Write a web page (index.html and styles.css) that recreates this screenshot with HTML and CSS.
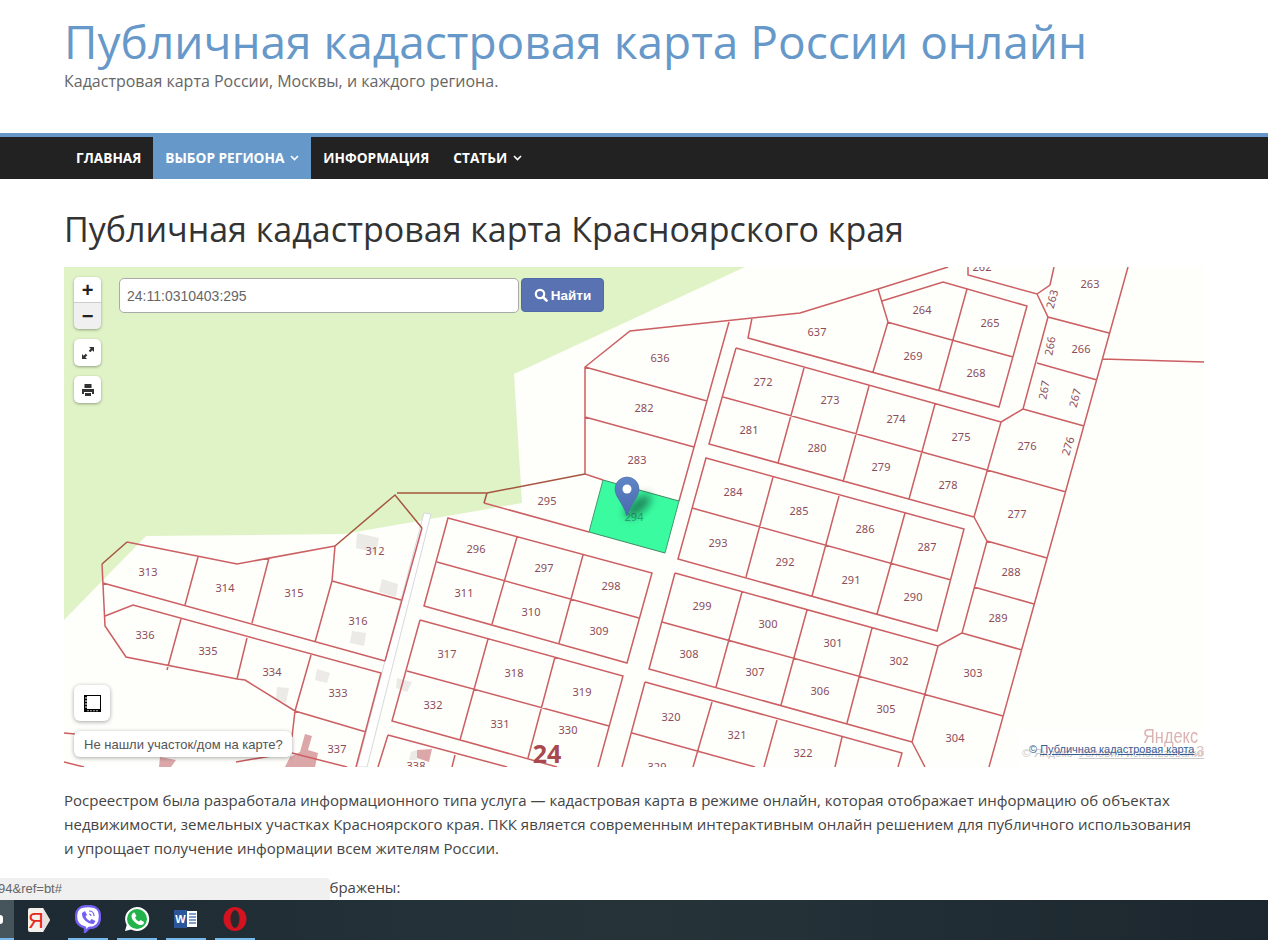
FILE: index.html
```html
<!DOCTYPE html>
<html lang="ru">
<head>
<meta charset="utf-8">
<title>Публичная кадастровая карта Красноярского края</title>
<link rel="stylesheet" href="styles.css">
</head>
<body>
<header class="site-head">
  <h1 class="site-title">Публичная кадастровая карта России онлайн</h1>
  <p class="site-desc">Кадастровая карта России, Москвы, и каждого региона.</p>
</header>
<nav class="nav">
  <a class="nav-item">Главная</a>
  <a class="nav-item active">Выбор региона<svg class="chev" viewBox="0 0 9 6"><path d="M1 1l3.500 3.500L8 1"/></svg></a>
  <a class="nav-item">Информация</a>
  <a class="nav-item">Статьи<svg class="chev" viewBox="0 0 9 6"><path d="M1 1l3.500 3.500L8 1"/></svg></a>
</nav>
<main class="content">
  <h2 class="page-title">Публичная кадастровая карта Красноярского края</h2>
  <div class="map">
    <svg class="map-art" viewBox="64 267 1140 500" width="1140" height="500">
      <defs>
        <filter id="blur" x="-50%" y="-50%" width="200%" height="200%"><feGaussianBlur stdDeviation="4"/></filter>
        <linearGradient id="pinfill" x1="0" y1="0" x2="0" y2="1"><stop offset="0" stop-color="#5f86c6"/><stop offset="1" stop-color="#4a68ae"/></linearGradient>
      </defs>
      <path class="forest" d="M64 267H745L514 374 522 503 344 534 146 536 64 620Z"/>
      <path class="road" d="M424 513L431 514 367 767H357Z"/>
      <path class="bld" d="M357 533L379 538 376 553 356 548ZM382 579L398 584 396 597 379 592ZM352 631L366 633 364 646 350 643ZM317 669L330 673 327 683 315 680ZM277 687L289 688 286 703 276 700ZM397 678L412 682 407 692 396 688ZM411 752L417 750 417 760 409 760Z"/>
      <path class="bld-red" d="M305 734L312 736 308 750 318 753 315 767H285L290 757 300 752ZM417 750L432 749 429 762 417 758ZM160 757L176 760 171 767H159Z"/>
      <path class="parcel-on" d="M603 480L679 501 665 553 589 532Z"/>
      <path class="lines" d="M603 480L585 474V367L630 331 800 313 878 289 948 267M585 367L707 401M585 417L694 447M729 322L679 501M752 318L748 338 999 407 1027 306 943 282 882 301M878 289L888 322 873 372M887 322L1013 357M967 289L939 390M968 267V275L1037 294 1050 285 1054 267M1037 294L1048 317 1109 333M1128 267L989 767M1102 359L1204 362M1048 317L1023 409 1001 422 974 517 987 541 1047 558M1037 363L1097 380M1023 409L1084 426M987 470L1066 492M736 348L1001 422M736 348L709 444 974 517M723 397L987 470M804 368L778 463M869 386L843 482M935 404L909 499M706 458L964 529 937 631 678 559ZM692 508L951 580M773 477L746 577M839 496L812 596M905 513L877 614M675 573L938 646 962 633 987 541M974 587L1034 604M962 633L1022 650M938 646L912 742 925 767M675 573L649 669 912 742M662 622L1003 716M742 592L716 687M807 610L781 705M872 628L847 723M645 682L902 753 898 767M645 682L622 767M632 733L755 767M712 702L693 767M777 720L764 767M842 737L835 767M448 518L652 573 627 663 424 606ZM437 562L639 618M517 537L492 624M583 555L559 643M420 620L623 676 598 767M420 620L392 721 557 767M407 671L609 726M488 639L460 740M555 657L528 758M388 735L507 767M388 735L378 767M455 755L452 767M102 564L105 626 126 657 237 679 245 680 295 711 366 732M127 542L237 564 335 546M103 583L385 661M105 616L133 605 381 673 356 767M198 557L185 605M269 558L252 623M335 546L332 581 315 642M332 581L401 600M181 619L167 670M247 638L237 679M311 655L295 711 292 737M422 528L385 661M292 753L347 767M64 733L75 734M64 762L84 767M236 762L277 755M484 503L589 532"/>
      <path class="lines-green" d="M102 564L127 542M335 546L395 495 422 528M397 493H487L585 474M487 493L484 503"/>
      <path class="parcel-edge" d="M603 480L679 501M665 553L589 532"/>
      <path class="parcel-side" d="M679 501L665 553M589 532L603 480"/>
      <g class="lb">
        <text x="660" y="362">636</text><text x="644" y="412">282</text><text x="637" y="464">283</text><text x="547" y="505">295</text>
        <text x="817" y="336">637</text><text x="922" y="314">264</text><text x="990" y="327">265</text><text x="913" y="360">269</text><text x="976" y="377">268</text><text x="1090" y="288">263</text><text x="1081" y="353">266</text>
        <text x="982" y="271">262</text>
        <text x="763" y="386">272</text><text x="830" y="404">273</text><text x="896" y="423">274</text><text x="961" y="441">275</text><text x="1027" y="450">276</text>
        <text x="749" y="434">281</text><text x="817" y="452">280</text><text x="881" y="471">279</text><text x="948" y="489">278</text><text x="1017" y="518">277</text>
        <text x="733" y="496">284</text><text x="799" y="515">285</text><text x="865" y="533">286</text><text x="927" y="551">287</text>
        <text x="718" y="547">293</text><text x="785" y="566">292</text><text x="851" y="584">291</text><text x="913" y="601">290</text><text x="1011" y="576">288</text><text x="998" y="622">289</text>
        <text x="476" y="553">296</text><text x="544" y="572">297</text><text x="611" y="590">298</text><text x="464" y="597">311</text><text x="531" y="616">310</text><text x="599" y="635">309</text>
        <text x="702" y="610">299</text><text x="768" y="628">300</text><text x="833" y="647">301</text><text x="899" y="665">302</text><text x="973" y="677">303</text><text x="955" y="742">304</text>
        <text x="886" y="713">305</text><text x="820" y="695">306</text><text x="755" y="676">307</text><text x="689" y="658">308</text>
        <text x="447" y="658">317</text><text x="514" y="677">318</text><text x="582" y="696">319</text><text x="433" y="709">332</text><text x="500" y="728">331</text><text x="568" y="734">330</text>
        <text x="671" y="721">320</text><text x="737" y="739">321</text><text x="803" y="757">322</text><text x="657" y="771">329</text>
        <text x="337" y="753">337</text><text x="416" y="770">338</text><text x="338" y="697">333</text><text x="272" y="676">334</text><text x="208" y="655">335</text><text x="145" y="639">336</text>
        <text x="148" y="576">313</text><text x="225" y="592">314</text><text x="294" y="597">315</text><text x="358" y="625">316</text><text x="375" y="555">312</text>
        <text transform="translate(1052 299) rotate(-75)" y="4">263</text>
        <text transform="translate(1050 346) rotate(-80)" y="4">266</text>
        <text transform="translate(1044 390) rotate(-80)" y="4">267</text>
        <text transform="translate(1075 398) rotate(-75)" y="4">267</text>
        <text transform="translate(1068 446) rotate(-72)" y="4">276</text>
      </g>
      <text class="lb-faint" x="634" y="521">294</text>
      <text class="lb-big" x="547" y="763">24</text>
      <ellipse class="pin-shadow" cx="638" cy="506" rx="16" ry="7" transform="rotate(-40 638 506)"/>
      <path class="pin" d="M627 516C623 503 615 497 615 489a12 12 0 0 1 24 0C639 497 631 503 627 516Z"/>
      <circle class="pin-dot" cx="627" cy="489" r="4.500"/>
    </svg>

    <div class="zoom-ctl">
      <button class="ctl-btn plus">+</button>
      <button class="ctl-btn minus">−</button>
    </div>
    <button class="ctl-single expand"><svg viewBox="0 0 14 14" width="14" height="14"><path class="ic-fill" d="M13 1v5l-1.700-1.700-2 2-1.600-1.600 2-2L8 1zM1 13V8l1.700 1.700 2-2 1.600 1.600-2 2L6 13z"/></svg></button>
    <button class="ctl-single print"><svg viewBox="0 0 14 14" width="14" height="14"><path class="ic-fill" d="M3.500 1h7v4h-7zM1 6h12v5h-2V9H3v2H1zM4 10h6v3H4z"/></svg></button>

    <form class="search">
      <input class="search-input" type="text" value="24:11:0310403:295">
      <button class="search-btn" type="button"><svg viewBox="0 0 14 14" width="14" height="14"><circle class="ic-ring" cx="6" cy="6" r="4.200"/><path class="ic-handle" d="M9 9l3.600 3.600"/></svg>Найти</button>
    </form>

    <button class="ruler"><svg viewBox="0 0 17 17" width="17" height="17"><path class="ic-black" d="M0 0h17v17H0z"/><path class="ic-white" d="M3 1h13v13H3z"/><path class="ic-ticks" d="M1 3h2M1 6h2M1 9h2M1 12h2M4 15v1.400M7 15v1.400M10 15v1.400M13 15v1.400"/></svg></button>
    <div class="tip">Не нашли участок/дом на карте?</div>

    <div class="attrib">
      <span class="ya-logo">Яндекс</span>
      <span class="ya-terms">© Яндекс &nbsp;<u>Условия использования</u></span>
      <span class="ya-num">3</span>
      <span class="attrib-link">© <u>Публичная кадастровая карта</u></span>
    </div>
  </div>
  <p class="text">Росреестром была разработала информационного типа услуга — кадастровая карта в режиме онлайн, которая отображает информацию об объектах недвижимости, земельных участках Красноярского края. ПКК является современным интерактивным онлайн решением для публичного использования и упрощает получение информации всем жителям России.</p>
  <p class="text">В публичной кадастровой карте изображены:</p>
</main>

<div class="status"><span class="status-url">94&amp;ref=bt#</span></div>

<div class="taskbar">
  <div class="task start"><span class="start-glyph"></span></div>
  <div class="task"><svg viewBox="0 0 26 26" width="26" height="26"><path class="ya-shape" d="M4 1h13l7 12-7 12H4a2 2 0 0 1-2-2V3a2 2 0 0 1 2-2z"/><path class="ya-side" d="M17 1l7 12-7 12z"/><text class="ya-letter" x="10" y="21">Я</text></svg></div>
  <div class="task on"><svg viewBox="0 0 26 28" width="26" height="28"><path class="viber" d="M13 1c7 0 12 2 12 11s-5 11-11 11l-4 4v-4.400C4 21 1 18 1 12 1 3 6 1 13 1z"/><path class="viber-in" d="M7 8l3-2 2 4-1.500 1.500c1 2 2.500 3.500 4.500 4.500L16.500 14l4 2-2 3c-6 0-12-5-11.500-11z"/><path class="viber-arc" d="M14 6c3 0 5 2 5 5M14 9c1.300 0 2 .8 2 2"/></svg></div>
  <div class="task on"><svg viewBox="0 0 26 26" width="26" height="26"><path class="wa-white" d="M13 1a12 12 0 0 0-10.300 18L1 25l6.200-1.600A12 12 0 1 0 13 1z"/><circle class="wa-green" cx="13" cy="13" r="10"/><path class="wa-white" d="M8.500 7l2-.5 2 3.500-1.500 1.500c1 2 2 3 4 4l1.500-1.500 3.500 2-.5 2c-1.500 1.500-4 1.500-7-.5-3-2-5-5-5-7 0-1.500.5-2.500 1.500-3.500z"/></svg></div>
  <div class="task on"><svg viewBox="0 0 26 26" width="26" height="26"><path class="wd-page" d="M13 5h11v16H13z"/><path class="wd-lines" d="M16 8h7M16 11h7M16 14h7M16 17h7"/><path class="wd-blue" d="M1 4h13v18H1z"/><text class="wd-w" x="7.500" y="17">W</text></svg></div>
  <div class="task on"><svg viewBox="0 0 26 26" width="26" height="26"><ellipse class="op" cx="13" cy="13" rx="11.500" ry="12"/><ellipse class="op-in" cx="13" cy="13" rx="4.500" ry="9"/></svg></div>
</div>
</body>
</html>
```
FILE: styles.css
```css
html, body {
  margin: 0;
  padding: 0;
  height: 940px;
  overflow: hidden;
  background: #fff;
  font-family: "Open Sans", sans-serif;
  color: #444;
}

.site-head {
  height: 133px;
  box-sizing: border-box;
  padding: 11px 64px 0;
}
.site-title {
  margin: 0;
  font-size: 46px;
  line-height: 60px;
  font-weight: 400;
  color: #6699c9;
  white-space: nowrap;
}
.site-desc {
  margin: 1px 0 0;
  font-size: 16px;
  line-height: 18px;
  color: #666;
}

.nav {
  display: flex;
  height: 42px;
  padding-left: 64px;
  background: #222;
  border-top: 4px solid #6699c9;
}
.nav-item {
  display: flex;
  align-items: center;
  gap: 6px;
  padding: 0 12px 2px;
  font-size: 13.65px;
  font-weight: 700;
  text-transform: uppercase;
  color: #fff;
}
.nav-item.active { background: #6699c9; }
.chev {
  width: 9px;
  height: 6px;
  margin-top: 1px;
  fill: none;
  stroke: #fff;
  stroke-width: 1.6;
}

.content { padding: 0 64px; }
.page-title {
  margin: 27px 0 15px;
  font-size: 34px;
  line-height: 46px;
  font-weight: 400;
  color: #333;
}

.map {
  position: relative;
  width: 1140px;
  height: 500px;
  overflow: hidden;
  background: #fefefa;
}
.map-art { display: block; }
.forest { fill: #e0f3c6; }
.road { fill: #fff; stroke: #d5d9da; stroke-width: 1; }
.bld { fill: #ebeae7; }
.bld-red { fill: #dba7a8; }
.parcel-on { fill: #3bfba0; }
.lines { fill: none; stroke: #cb5f63; stroke-width: 1.5; }
.lines-green { fill: none; stroke: #a5553f; stroke-width: 1.5; }
.parcel-edge { fill: none; stroke: #3f8a63; stroke-width: 1; }
.parcel-side { fill: none; stroke: #3f9a70; stroke-width: 1; }
.lb text {
  font-family: "Noto Sans", sans-serif;
  font-size: 11px;
  fill: #8c4d5a;
  text-anchor: middle;
}
.lb-faint {
  font-family: "Noto Sans", sans-serif;
  font-size: 11px;
  fill: #2fa673;
  text-anchor: middle;
}
.lb-big {
  font-family: "Open Sans", sans-serif;
  font-size: 25px;
  font-weight: 700;
  fill: #a9484f;
  text-anchor: middle;
}
.pin-shadow { fill: #0d4f3a; opacity: .65; filter: url(#blur); }
.pin { fill: url(#pinfill); stroke: #4a66a6; stroke-width: .6; }
.pin-dot { fill: #fff; }

.zoom-ctl {
  position: absolute;
  left: 10px;
  top: 10px;
  width: 27px;
  border-radius: 5px;
  overflow: hidden;
  box-shadow: 0 1px 3px rgba(0, 0, 0, .35);
}
.ctl-btn {
  display: block;
  width: 27px;
  height: 25px;
  padding: 0;
  border: 0;
  background: #fff;
  font-family: "Liberation Sans", sans-serif;
  font-size: 20px;
  font-weight: 700;
  line-height: 24px;
  color: #222;
}
.ctl-btn.minus { height: 27px; background: #f0f0f0; border-top: 1px solid #ccc; }
.ctl-single {
  position: absolute;
  left: 10px;
  display: flex;
  align-items: center;
  justify-content: center;
  width: 27px;
  height: 27px;
  padding: 0;
  border: 0;
  border-radius: 5px;
  background: #fff;
  box-shadow: 0 1px 3px rgba(0, 0, 0, .35);
}
.expand { top: 72px; }
.print { top: 109px; }
.ic-fill { fill: #333; }

.search {
  position: absolute;
  left: 55px;
  top: 11px;
  display: flex;
  gap: 2px;
}
.search-input {
  box-sizing: border-box;
  width: 400px;
  height: 35px;
  padding: 0 7px;
  border: 1px solid #aaa;
  border-radius: 5px;
  background: #fff;
  font-family: "Liberation Sans", sans-serif;
  font-size: 14px;
  color: #666;
}
.search-btn {
  display: flex;
  align-items: center;
  justify-content: center;
  gap: 3px;
  width: 83px;
  height: 34px;
  padding: 0;
  border: 1px solid #4f6aa8;
  border-radius: 4px;
  background: #5872b2;
  font-family: "Liberation Sans", sans-serif;
  font-size: 13.5px;
  font-weight: 700;
  color: #fff;
}
.ic-ring { fill: none; stroke: #fff; stroke-width: 2.2; }
.ic-handle { fill: none; stroke: #fff; stroke-width: 2.6; stroke-linecap: round; }

.ruler {
  position: absolute;
  left: 10px;
  top: 418px;
  display: flex;
  align-items: center;
  justify-content: center;
  width: 36px;
  height: 36px;
  padding: 0;
  border: 0;
  border-radius: 6px;
  background: #fff;
  box-shadow: 0 1px 4px rgba(0, 0, 0, .35);
}
.ic-black { fill: #000; }
.ic-white { fill: #fff; }
.ic-ticks { fill: none; stroke: #fff; stroke-width: 1; }

.tip {
  position: absolute;
  left: 10px;
  top: 464px;
  box-sizing: border-box;
  width: 218px;
  height: 26px;
  padding-left: 10px;
  border-radius: 6px;
  background: #fff;
  box-shadow: 0 1px 4px rgba(0, 0, 0, .35);
  font-family: "Liberation Sans", sans-serif;
  font-size: 13px;
  line-height: 27px;
  white-space: nowrap;
  color: #555;
}

.attrib {
  position: absolute;
  right: 0;
  bottom: 0;
  width: 186px;
  height: 37px;
  background: rgba(255, 255, 255, .7);
  font-family: "Liberation Sans", sans-serif;
}
.ya-logo {
  position: absolute;
  left: 125px;
  top: -5px;
  font-size: 20px;
  transform: scaleX(.82);
  transform-origin: left;
  color: #dcb3b3;
}
.ya-terms {
  position: absolute;
  left: 4px;
  top: 17px;
  font-size: 11.5px;
  white-space: nowrap;
  color: #c9c9c9;
}
.ya-num {
  position: absolute;
  left: 178px;
  top: 12px;
  font-size: 15px;
  color: #dcc3c3;
}
.attrib-link {
  position: absolute;
  left: 11px;
  top: 13px;
  font-size: 11px;
  white-space: nowrap;
  color: #3c5d92;
}

.text {
  margin: 0 0 15px;
  font-size: 15px;
  line-height: 24px;
  color: #444;
}
.map + .text { margin-top: 21px; }

.status {
  position: fixed;
  left: 0;
  top: 878px;
  width: 330px;
  height: 22px;
  overflow: hidden;
  background: #f0f0f0;
  border-top-right-radius: 4px;
  font-family: "Liberation Sans", sans-serif;
  font-size: 13px;
  line-height: 22px;
  color: #666;
}
.status-url { margin-left: -2px; }

.taskbar {
  position: fixed;
  left: 0;
  top: 900px;
  width: 1268px;
  height: 40px;
  display: flex;
  gap: 9px;
  padding-left: 19px;
  box-sizing: border-box;
  background: linear-gradient(90deg, #1d2a33, #26343a 50%, #1c262e);
}
.task {
  display: flex;
  align-items: center;
  justify-content: center;
  width: 40px;
  height: 40px;
  box-sizing: border-box;
}
.task.on { border-bottom: 2px solid #76b9ed; }
.start {
  position: absolute;
  left: 0;
  top: 0;
  width: 14px;
  background: #46555c;
  border-bottom: 2px solid #76b9ed;
}
.start-glyph {
  width: 3px;
  height: 9px;
  margin-left: -11px;
  border-radius: 0 3px 3px 0;
  background: #fff;
}
.ya-shape { fill: #f4f1ec; }
.ya-side { fill: #e6e2da; }
.ya-letter {
  font-family: "Liberation Sans", sans-serif;
  font-size: 22px;
  fill: #e4281e;
  text-anchor: middle;
}
.viber { fill: #fff; stroke: #7360f2; stroke-width: 2.4; }
.viber-in { fill: #7360f2; }
.viber-arc { fill: none; stroke: #7360f2; stroke-width: 1.2; }
.wa-white { fill: #fff; }
.wa-green { fill: #22b34a; }
.wd-page { fill: #fff; }
.wd-lines { stroke: #5b7fbb; stroke-width: 1.4; }
.wd-blue { fill: #2b579a; }
.wd-w {
  font-family: "Liberation Sans", sans-serif;
  font-size: 11px;
  font-weight: 700;
  fill: #fff;
  text-anchor: middle;
}
.op { fill: #d3131f; }
.op-in { fill: #2a2a2e; }
```
